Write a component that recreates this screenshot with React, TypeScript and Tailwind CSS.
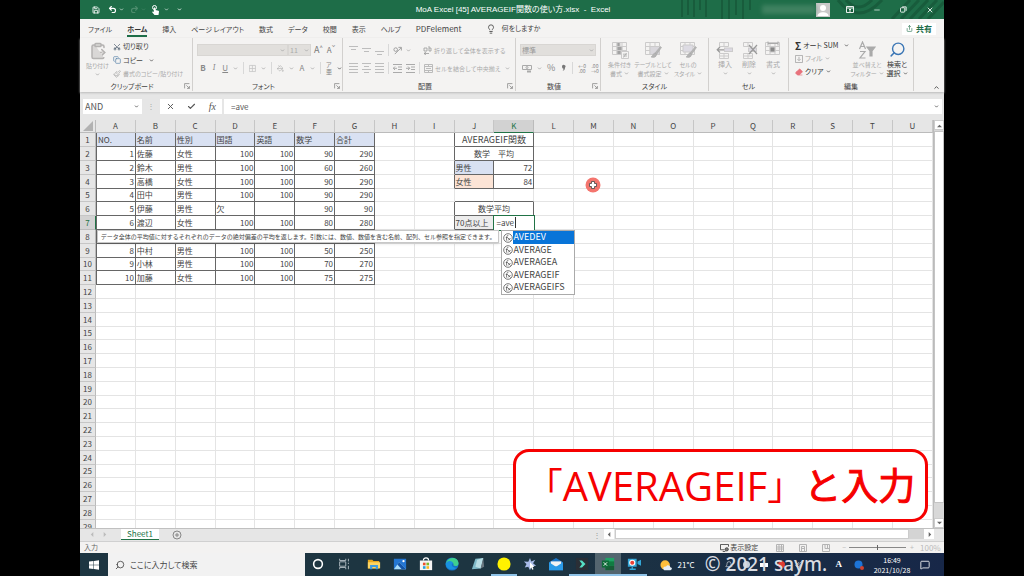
import type { ReactNode } from 'react';
import {
  Bell,
  Check,
  ChevronDown,
  ChevronUp,
  ClipboardPaste,
  Copy,
  Eraser,
  Lightbulb,
  MessageSquare,
  Minus,
  Paintbrush,
  PaintBucket,
  Redo2,
  Save,
  Scissors,
  Search,
  Share,
  Undo2,
  X,
} from 'lucide-react';
import { clsx } from 'clsx';

const TABS = ['ファイル', 'ホーム', '挿入', 'ページ レイアウト', '数式', 'データ', '校閲', '表示', 'ヘルプ', 'PDFelement'];
const COLUMNS = 'ABCDEFGHIJKLMNOPQRSTU'.split('');
const ROWS = Array.from({ length: 29 }, (_, i) => i + 1);

const SCORES: Record<number, string[]> = {
  1: ['NO.', '名前', '性別', '国語', '英語', '数学', '合計'],
  2: ['1', '佐藤', '女性', '100', '100', '90', '290'],
  3: ['2', '鈴木', '男性', '100', '100', '60', '260'],
  4: ['3', '高橋', '女性', '100', '100', '90', '290'],
  5: ['4', '田中', '男性', '100', '100', '90', '290'],
  6: ['5', '伊藤', '男性', '欠', '', '90', '90'],
  7: ['6', '渡辺', '女性', '100', '100', '80', '280'],
  8: ['', '', '', '', '', '', ''],
  9: ['8', '中村', '男性', '100', '100', '50', '250'],
  10: ['9', '小林', '男性', '100', '100', '70', '270'],
  11: ['10', '加藤', '女性', '100', '100', '75', '275'],
};

const SUGGESTIONS = ['AVEDEV', 'AVERAGE', 'AVERAGEA', 'AVERAGEIF', 'AVERAGEIFS'];

function Chevron({ dark = false }: { dark?: boolean }) {
  return <ChevronDown className={clsx('h-[5px] w-[5px] shrink-0', dark ? 'text-[#555]' : 'text-[#aaa]')} strokeWidth={4} />;
}

function Divider() {
  return <span className="h-3 w-px shrink-0 bg-[#d8d8d8]" />;
}

const TRIANGLES = {
  up: 'M0 5h6L3 2z',
  down: 'M0 1h6L3 4z',
  left: 'M4 0v6L1 3z',
  right: 'M2 0v6l3-3z',
};

function Triangle({ to, pale = false }: { to: keyof typeof TRIANGLES; pale?: boolean }) {
  return (
    <svg viewBox="0 0 6 6" className="h-[5px] w-[5px]" fill={pale ? '#bbb' : '#666'}>
      <path d={TRIANGLES[to]} />
    </svg>
  );
}

function Group({ label, className, launcher, children }: { label: string; className: string; launcher?: boolean; children: ReactNode }) {
  return (
    <section aria-label={label} className={clsx('flex shrink-0 flex-col border-r border-[#d2d0ce]', className)}>
      <div className="flex-1">{children}</div>
      <div className="flex h-[10px] items-center">
        <span className="flex-1 text-center leading-[10px] text-[#444]">{label}</span>
        {launcher && (
          <svg viewBox="0 0 10 10" className="mr-[2px] h-[6px] w-[6px]" fill="none" stroke="#888" strokeWidth="1.3">
            <path d="M1 9V1h8M4 4l5 5M9 5v4H5" />
          </svg>
        )}
      </div>
    </section>
  );
}

function BigButton({ lines, icon, active, className }: { lines: string[]; icon: ReactNode; active?: boolean; className: string }) {
  return (
    <button className={clsx('flex shrink-0 flex-col items-center whitespace-nowrap leading-[9px]', active ? 'text-[#333]' : 'text-[#a8a8a8]', className)}>
      <span className="flex h-[21px] items-center">{icon}</span>
      <span>{lines[0]}</span>
      <span className="flex items-center gap-[2px]">
        {lines[1]}
        <span className={clsx(!lines[1] && 'flex h-[9px] items-center')}>
          <Chevron dark={active} />
        </span>
      </span>
    </button>
  );
}

function Lines({ ys, short = false }: { ys: number[]; short?: boolean }) {
  return (
    <svg viewBox="0 0 9 10" className="h-[10px] w-[9px]" stroke="#bdbdbd">
      {ys.map((y, i) => (
        <path key={y} d={short && i % 2 ? `M2 ${y}.5h5` : `M0 ${y}.5h9`} />
      ))}
    </svg>
  );
}

function GridIcon({ variant }: { variant: 'cond' | 'table' | 'style' | 'insert' | 'delete' | 'format' }) {
  return (
    <svg viewBox="0 0 18 18" className="h-[18px] w-[18px]" fill="none" stroke="#cccbcb" strokeWidth="1">
      {variant === 'insert' || variant === 'delete' ? (
        <>
          <path d="M3.5 1.5h9v4h-9zM8 1.5v4M3.5 12.5h9v5h-9zM8 12.5v5M3.5 15h9" />
          <rect x="8.5" y="7" width="8" height="3.5" fill="#dcd9e2" />
          {variant === 'insert' ? <path d="M8 8.8H1.5M4 6 1.2 8.8 4 11.5" stroke="#999" strokeWidth="1.2" /> : <path d="m9 4 8 9M17 4l-8 9" stroke="#999" strokeWidth="1.2" />}
        </>
      ) : (
        <>
          <path d="M1.5 1.5h14v12h-14zM1.5 5.5h14M1.5 9.5h14M6 1.5v12M11 1.5v12" />
          {variant === 'cond' && (
            <>
              <path d="M6 1.5h3v4H6zM6 5.5h5v4H6zM6 9.5h4v4H6z" fill="#a2a2a2" />
              <path d="M10.5 10.5h7v7h-7z" fill="#f4f3f2" />
              <path d="M12 13.2h4M12 15h4M15.5 12l-3 4.5" stroke="#aaa" strokeWidth=".8" />
            </>
          )}
          {variant === 'table' && <path d="M6 5.5h9.500v8H6z" fill="#d9d7dc" />}
          {variant === 'style' && <path d="M4 4h10v7H4z" fill="#dddbe3" />}
          {(variant === 'table' || variant === 'style') && <path d="M16.500 5.500 11 12l1.500 1.500 5-7zM11 12c-2 0-2 3-4 4 3 1 5.500 0 5.500-2.500z" fill="#b4b4b4" stroke="#aaa" strokeWidth=".6" />}
          {variant === 'format' && (
            <>
              <path d="M6 6h5v5H6z" fill="#888" />
              <path d="M4 .5v4M14 .5v4M4 2.500h10" stroke="#aaa" />
            </>
          )}
        </>
      )}
    </svg>
  );
}

function TitleBar() {
  return (
    <header className="relative flex h-[19px] shrink-0 items-center bg-[#1e6d48] text-white">
      <svg className="absolute right-0 top-0 h-full w-[264px]" viewBox="0 0 264 19" fill="none" stroke="#185c3c" strokeWidth="3">
        <path d="M2 0v17M8 0v15M14 0v17M20 0v10M26 0v17M42 0v19M49 0v19M56 0v15M63 0v19M70 0v10" strokeWidth="2" />
        <path d="M158 0q20 26 44 0M166 0q12 14 26 0M212 19l18-19M221 19l18-19M230 19l18-19M239 19l18-19M248 19l16-17" />
      </svg>
      <div className="relative flex flex-1 items-center pl-3">
        <Save className="h-2 w-2" strokeWidth={2.5} />
        <Undo2 className="ml-[8px] h-[9px] w-[9px]" strokeWidth={3} />
        <ChevronDown className="ml-[2px] h-[5px] w-[5px]" strokeWidth={3} />
        <Redo2 className="ml-[6px] h-[9px] w-[9px] text-[#4d8c6d]" strokeWidth={3} />
        <ChevronDown className="ml-[2px] h-[5px] w-[5px] text-[#4d8c6d]" strokeWidth={3} />
        <svg viewBox="0 0 9 10" className="ml-[5px] h-[10px] w-[9px]" fill="#fff">
          <circle cx="3.500" cy="2.500" r="2" fill="none" stroke="#fff" />
          <path d="M2.800 2.500h1.500V5l3.200.8c.5.200.6.500.5 1L7.500 10h-4L1 7l.8-.6 1 .6z" />
        </svg>
        <ChevronDown className="ml-[4px] h-[5px] w-[5px]" strokeWidth={3} />
        <ChevronDown className="ml-[8px] h-[5px] w-[5px]" strokeWidth={4} />
      </div>
      <h1 className="relative whitespace-pre font-['Liberation_Sans','Noto_Sans_CJK_JP',sans-serif] text-[8px] leading-[19px]">MoA Excel [45] AVERAGEIF関数の使い方.xlsx  -  Excel</h1>
      <div className="relative flex flex-1 items-center justify-end pr-[10px]">
        <span className="h-[9px] w-[54px] bg-[#4d8a6b]/70 blur-[2px]" />
        <svg viewBox="0 0 14 14" className="h-[14px] w-[14px]">
          <path fill="#c9c9c9" d="M0 0h14v14H0z" />
          <circle cx="7" cy="5" r="3" fill="#fff" />
          <path d="M1.500 13c0-5 11-5 11 0z" fill="#fff" />
        </svg>
        <svg viewBox="0 0 8 7" className="ml-4 h-[7px] w-2" fill="none" stroke="#fff">
          <path d="M.5.5h7v6h-7zM.5 2h7M4 3v3M3 4l1-1 1 1" strokeWidth=".9" />
        </svg>
        <button aria-label="最小化" className="ml-[19px]"><Minus className="h-2 w-2" /></button>
        <button aria-label="元に戻す" className="ml-[19px]">
          <svg viewBox="0 0 8 8" className="h-[7px] w-[7px]" fill="none" stroke="#fff">
            <rect x=".5" y="2" width="5" height="5" rx="1" />
            <path d="M2.500 1h4.500v4.500" />
          </svg>
        </button>
        <button aria-label="閉じる" className="ml-[19px]"><X className="h-2 w-2" strokeWidth={2.5} /></button>
      </div>
    </header>
  );
}

function TabStrip() {
  return (
    <nav className="flex h-[19px] shrink-0 items-center bg-[#f4f3f2] pl-2 pr-2 text-[7px] text-[#444]">
      <div className="flex gap-[15px]">
        {TABS.map((tab) => (
          <button
            key={tab}
            className={clsx(
              'whitespace-nowrap border-b-2 pt-[2px] leading-[12px]',
              tab === 'ホーム' ? 'border-[#1e6d48] font-bold text-[#333]' : 'border-transparent',
              tab === 'PDFelement' && 'text-[8px]',
            )}
          >
            {tab}
          </button>
        ))}
      </div>
      <Lightbulb className="ml-6 h-[10px] w-[10px]" />
      <button className="ml-[6px]">何をしますか</button>
      <button className="ml-auto flex h-3 items-center gap-[3px] bg-white px-1 text-[8px] font-bold text-[#1e6d48]">
        <Share className="h-[7px] w-[7px]" />
        共有
      </button>
    </nav>
  );
}

function Ribbon() {
  return (
    <div className="relative flex h-[54px] shrink-0 bg-[#f4f3f2] pb-[1px] text-[7px] text-[#444] shadow-[0_1px_2px_#bbb]">
      <Group label="クリップボード" className="w-[113px]" launcher>
        <div className="flex pt-[2px]">
          <BigButton className="ml-1 w-[27px] text-[6px]" lines={['貼り付け', '']} icon={<ClipboardPaste className="h-[18px] w-[18px] fill-[#d9d7d6] text-[#b4b2b1]" />} />
          <div className="ml-[2px] flex flex-col whitespace-nowrap">
            <button className="flex h-[13px] items-center gap-[2px]"><Scissors className="h-2 w-2 -rotate-90 text-[#456]" />切り取り</button>
            <button className="flex h-[14px] items-center gap-[2px]"><Copy className="h-2 w-2 text-[#5580a8]" />コピー<span className="ml-1"><Chevron dark /></span></button>
            <button className="flex h-[13px] items-center gap-[2px] text-[6px] text-[#aaa]"><Paintbrush className="h-2 w-2" />書式のコピー/貼り付け</button>
          </div>
        </div>
      </Group>

      <Group label="フォント" className="w-[150px]" launcher>
        <div className="flex items-center pl-1 pt-[6px]">
          <div className="relative">
            <select aria-label="フォント名" className="h-3 w-[91px] appearance-none border border-[#d8d6d3] bg-[#e1dfdc]" disabled />
            <span className="absolute right-[3px] top-1"><Chevron /></span>
          </div>
          <div className="relative">
            <select aria-label="フォント サイズ" className="h-3 w-[23px] appearance-none border border-[#d8d6d3] bg-[#e1dfdc] pl-[1px] leading-[10px] text-[#aaa]" disabled>
              <option>11</option>
            </select>
            <span className="absolute right-[2px] top-1"><Chevron /></span>
          </div>
          <button className="ml-[3px] text-[9px] leading-3 text-[#777]">A<sup className="text-[6px]">^</sup></button>
          <button className="ml-1 text-[8px] leading-3 text-[#777]">A<sup className="text-[6px]">ˇ</sup></button>
        </div>
        <div className="mt-[6px] flex h-3 items-center gap-[5px] pl-[7px] text-[8px] text-[#888]">
          <button className="w-2 font-bold">B</button>
          <button className="w-2 font-serif italic">I</button>
          <button className="w-2 underline">U</button>
          <Chevron />
          <Divider />
          <svg viewBox="0 0 9 9" className="h-[9px] w-[9px]" fill="none" stroke="#c4c4c4"><path d="M.5.5h8v8h-8zM4.500.5v8M.5 4.500h8" /></svg>
          <Chevron />
          <Divider />
          <PaintBucket className="h-[9px] w-[9px] text-[#aaa]" />
          <Chevron />
          <button className="w-2">A</button>
          <Chevron />
          <Divider />
          <span className="flex flex-col text-[6px] leading-[7px]"><span>ア</span><span>亜</span></span>
          <Chevron dark />
        </div>
      </Group>

      <Group label="配置" className="w-[173px]" launcher>
        <div className="flex h-6 items-center gap-1 whitespace-nowrap pl-[6px] text-[6px] text-[#aaa]">
          <Lines ys={[1, 4]} short />
          <Lines ys={[3, 6]} short />
          <Lines ys={[6, 9]} short />
          <Divider />
          <svg viewBox="0 0 10 10" className="h-[9px] w-[9px]" fill="none" stroke="#999"><path d="m2 9 7-7M6 1.500h3.300V5" /><circle cx="3" cy="4" r="2" /></svg>
          <Chevron />
          <span className="ml-1"><Divider /></span>
          <button className="flex items-center gap-[2px]">
            <svg viewBox="0 0 9 9" className="h-[9px] w-[9px]" fill="none" stroke="#999"><path d="M1 2h3v3H1zM6 0v5h2V2H6M1 7.500h5M3 6 1 7.500 3 9" strokeWidth=".8" /></svg>
            <span className="[font-feature-settings:normal]">折り返して全体を表示する</span>
          </button>
        </div>
        <div className="flex h-3 items-center gap-1 whitespace-nowrap pl-[6px] text-[6px] text-[#aaa]">
          <Lines ys={[0, 3, 6, 9]} />
          <Lines ys={[0, 3, 6, 9]} short />
          <Lines ys={[0, 3, 6, 9]} />
          <Divider />
          <svg viewBox="0 0 9 9" className="h-[9px] w-[9px]" fill="none" stroke="#aaa"><path d="M0 .5h9M5 3h4M5 5.500h4M0 8.500h9M4 4.300H0M2 2.500.3 4.300 2 6" /></svg>
          <svg viewBox="0 0 9 9" className="h-[9px] w-[9px]" fill="none" stroke="#aaa"><path d="M0 .5h9M5 3h4M5 5.500h4M0 8.500h9M0 4.300h4M2 2.500l1.700 1.800L2 6" /></svg>
          <Divider />
          <button className="flex items-center gap-[2px]">
            <svg viewBox="0 0 9 9" className="h-[9px] w-[9px]" fill="none" stroke="#bbb"><path d="M.5.5h8v8h-8zM.5 2.500h8M.5 6.500h8M4.500.5v2M4.500 6.500v2M2 4.500h5" /></svg>
            <span className="[font-feature-settings:normal]">セルを結合して中央揃え</span>
          </button>
          <Chevron />
        </div>
      </Group>

      <Group label="数値" className="w-[85px]" launcher>
        <div className="relative px-1 pt-[6px]">
          <select aria-label="表示形式" className="h-3 w-full appearance-none border border-[#d8d6d3] bg-[#e1dfdc] pl-[1px] leading-[10px] text-[#999]" disabled>
            <option>標準</option>
          </select>
          <span className="absolute right-[6px] top-[10px]"><Chevron /></span>
        </div>
        <div className="mt-[6px] flex h-3 items-center gap-[5px] pl-[6px] text-[9px] text-[#888]">
          <svg viewBox="0 0 10 9" className="h-[9px] w-[10px]" fill="none" stroke="#aaa"><path d="M.5 1.500h9v4h-9z" /><circle cx="5" cy="3.500" r="1" /><path d="M5 7.500h4" strokeWidth="2" /></svg>
          <Chevron />
          <button className="leading-3">%</button>
          <button aria-label="桁区切りスタイル" className="w-[7px]">
            <svg viewBox="0 0 7 9" className="h-[9px] w-[7px]" fill="#777"><path d="M2 2.500a1.700 1.700 0 1 1 3 1.200C5 5.500 4 6.500 2.500 7c.7-.8 1-1.500 1-2.300C2.500 4.500 2 3.500 2 2.500z" /></svg>
          </button>
          <Divider />
          <button className="text-[5px] leading-[5px]">←0<br />.00</button>
          <button className="text-[5px] leading-[5px]">.00<br />→0</button>
        </div>
      </Group>

      <Group label="スタイル" className="w-[108px]">
        <div className="flex justify-between px-[5px] pt-[1px] text-[6px]">
          <BigButton className="w-[27px]" lines={['条件付き', '書式']} icon={<GridIcon variant="cond" />} />
          <BigButton className="w-10" lines={['テーブルとして', '書式設定']} icon={<GridIcon variant="table" />} />
          <BigButton className="w-[30px]" lines={['セルの', 'スタイル']} icon={<GridIcon variant="style" />} />
        </div>
      </Group>

      <Group label="セル" className="w-[80px]">
        <div className="flex justify-between px-1 pt-[1px]">
          <BigButton className="w-6" lines={['挿入', '']} icon={<GridIcon variant="insert" />} />
          <BigButton className="w-6" lines={['削除', '']} icon={<GridIcon variant="delete" />} />
          <BigButton className="w-6" lines={['書式', '']} icon={<GridIcon variant="format" />} />
        </div>
      </Group>

      <Group label="編集" className="w-[125px]">
        <div className="flex pt-[1px]">
          <div className="flex w-[60px] flex-col whitespace-nowrap pl-[6px]">
            <button className="flex h-[13px] items-center gap-[2px] text-[#333]"><b className="text-[10px] leading-3">Σ</b>オート SUM<span className="ml-1"><Chevron dark /></span></button>
            <button className="flex h-[13px] items-center gap-[2px] text-[#aaa]">
              <svg viewBox="0 0 9 9" className="h-2 w-2" fill="none" stroke="#aaa"><path d="M.5.5h8v8h-8zM4.500 2v4M2.800 4.700l1.700 1.700 1.700-1.700" /></svg>
              フィル<Chevron />
            </button>
            <button className="flex h-[13px] items-center gap-[2px] text-[#333]"><Eraser className="h-2 w-2 fill-[#e8727c] text-[#e8727c]" />クリア<Chevron dark /></button>
          </div>
          <BigButton
            className="ml-[3px] w-[30px] text-[6px]"
            lines={['並べ替えと', 'フィルター']}
            icon={
              <svg viewBox="0 0 18 18" className="h-[18px] w-[18px]" fill="none" stroke="#aaa" strokeWidth="1.200">
                <path d="m1.500 8 3-7 3 7M2.500 5.500h4M2 10.500h5L2 17h5.500" />
                <path d="M9 6h8l-3 4v5h-2v-5z" fill="#aaa" />
              </svg>
            }
          />
          <BigButton className="w-[30px]" active lines={['検索と', '選択']} icon={<Search className="h-[17px] w-[17px] -scale-x-100 text-[#3b76b5]" />} />
        </div>
      </Group>
      <button aria-label="リボンを折りたたむ" className="ml-auto self-end px-1"><ChevronUp className="h-[7px] w-[7px]" strokeWidth={3} /></button>
    </div>
  );
}

function FormulaBar() {
  return (
    <div className="flex h-7 shrink-0 items-center bg-[#e6e6e6] pl-[3px] pr-[2px] text-[8px] text-[#555]">
      <div className="relative">
        <input aria-label="名前ボックス" defaultValue="AND" className="h-[15px] w-[59px] bg-white pl-[2px] text-[9px] outline-none" />
        <span className="absolute right-[3px] top-[5px]"><Chevron dark /></span>
      </div>
      <span className="w-[18px] text-center text-[#aaa]">⋮</span>
      <div className="flex h-[15px] w-[62px] items-center justify-around bg-white">
        <X className="h-[9px] w-[9px]" strokeWidth={2.5} />
        <Check className="h-[9px] w-[9px]" strokeWidth={3} />
        <i className="font-['Liberation_Serif',serif] text-[10px]">fx</i>
      </div>
      <div className="relative ml-[2px] flex-1">
        <input aria-label="数式バー" defaultValue="=ave" className="h-[15px] w-full bg-white pl-[7px] outline-none" />
        <span className="absolute right-[3px] top-[5px]"><Chevron dark /></span>
      </div>
    </div>
  );
}

function DescriptionTip() {
  return (
    <div role="tooltip" className="absolute right-full top-[14px] -mr-[5px] w-max border border-[#c8c8c8] bg-white px-[3px] text-[6px] leading-[11px] text-[#444] shadow-sm [font-feature-settings:normal]">
      データ全体の平均値に対するそれぞれのデータの絶対偏差の平均を返します。引数には、数値、数値を含む名前、配列、セル参照を指定できます。
    </div>
  );
}

function SuggestionList() {
  return (
    <ul className="absolute left-[7px] top-[14px] z-10 w-[74px] border border-[#aaa] bg-white text-[#444]">
      {SUGGESTIONS.map((name, i) => (
        <li key={name} className="flex h-[12px] items-center odd:h-[13px]">
          <svg viewBox="0 0 10 10" className="ml-[1px] h-[10px] w-[10px] shrink-0" fill="none" stroke="#555" strokeWidth=".8">
            <circle cx="5" cy="5" r="4.300" />
            <path d="M5.300 2.500c-1.500-.5-1.500 1-1.800 5M2.800 4.500h2M5 5l2.500 2.500M7.500 5 5 7.500" />
          </svg>
          <span className={clsx('h-full flex-1 text-[9px] leading-3', i === 0 && 'bg-[#0874d8] text-white')}>{name}</span>
        </li>
      ))}
    </ul>
  );
}

function ScoreCell({ row, index, value }: { row: number; index: number; value: string }) {
  const numeric = /^\d+$/.test(value);
  return (
    <td className={clsx('border-b border-r border-[#666] px-[1px]', numeric && 'text-right', row === 1 && 'bg-[#d9e1f2]', index === 0 && 'border-l')}>{value}</td>
  );
}

// Cells of columns J and K, which hold the result tables
function ResultCells({ row }: { row: number }) {
  const box = 'border-b border-r border-[#666] px-[1px]';
  if (row === 1) return <td colSpan={2} className={clsx(box, 'text-center text-[9px]')}>AVERAGEIF関数</td>;
  if (row === 2) return <td colSpan={2} className={clsx(box, 'text-center')}>数学　平均</td>;
  if (row === 3 || row === 4) {
    return (
      <>
        <td className={clsx(box, row === 3 ? 'bg-[#d9e1f2]' : 'bg-[#fce4d6]')}>{row === 3 ? '男性' : '女性'}</td>
        <td className={clsx(box, 'text-right')}>{row === 3 ? '72' : '84'}</td>
      </>
    );
  }
  if (row === 5) {
    return (
      <>
        <td className="border-b border-r border-b-[#666] border-r-[#e4e4e4]" />
        <td className="border-b border-r border-b-[#666] border-r-[#e4e4e4]" />
      </>
    );
  }
  if (row === 6) return <td colSpan={2} className={clsx(box, 'text-center')}>数学平均</td>;
  return (
    <>
      <td className={clsx(box, 'bg-[#ededed]')}>70点以上</td>
      <td className="relative outline outline-[#217346]">
        <input aria-label="K7" defaultValue="=ave" className="block h-3 w-full bg-white pl-[2px] outline-none" />
        <span className="absolute left-[21px] top-[1px] h-[11px] w-px bg-[#333]" />
        <DescriptionTip />
        <SuggestionList />
      </td>
    </>
  );
}

function Sheet() {
  return (
    <div className="flex min-h-0 flex-1 bg-[#e6e6e6]">
      <div className="relative min-w-0 flex-1 overflow-hidden border-r border-[#bbb]">
        <table className="w-full table-fixed border-separate border-spacing-0 bg-white text-[8px] leading-3 text-[#444]">
          <thead>
            <tr className="h-[13px] bg-[#e6e6e6]">
              <th className="w-4 border-b border-r border-[#bbb]">
                <svg viewBox="0 0 12 12" className="ml-auto mr-[2px] h-[10px] w-[10px]"><path d="M12 0v12H0z" fill="#b2b2b2" /></svg>
              </th>
              {COLUMNS.map((col) => (
                <th
                  key={col}
                  className={clsx('border-b border-r font-normal', col === 'K' ? 'border-b-[#217346] border-r-[#bbb] bg-[#d2d2d2] text-[#217346]' : 'border-b-[#bbb] border-r-[#c6c6c6]')}
                >
                  {col}
                </th>
              ))}
            </tr>
          </thead>
          <tbody>
            {ROWS.map((row) => (
              <tr key={row} className={row % 5 === 0 ? 'h-[13px]' : 'h-[14px]'}>
                <th
                  className={clsx('border-b border-r font-normal', row === 7 ? 'border-b-[#bbb] border-r-[#217346] bg-[#d2d2d2] text-[#217346]' : 'border-b-[#c6c6c6] border-r-[#bbb] bg-[#e6e6e6]')}
                >
                  {row}
                </th>
                {COLUMNS.map((col, i) => {
                  if (i < 7 && SCORES[row]) return <ScoreCell key={col} row={row} index={i} value={SCORES[row][i]} />;
                  if (col === 'J' && row <= 7) return <ResultCells key={col} row={row} />;
                  if (col === 'K' && row <= 7) return null;
                  const besideResults = col === 'I' && row <= 7 && row !== 5;
                  return <td key={col} className={clsx('border-b border-r border-b-[#e4e4e4]', besideResults ? 'border-r-[#666]' : 'border-r-[#e4e4e4]')} />;
                })}
              </tr>
            ))}
          </tbody>
        </table>
      </div>
      <div className="flex w-[10px] shrink-0 flex-col items-center bg-[#d8d8d8]">
        <button aria-label="上へスクロール" className="flex h-[10px] w-full items-center justify-center border border-[#ccc] bg-white"><Triangle to="up" /></button>
        <div className="mt-px w-full flex-1 border border-[#c4c4c4] bg-white" />
        <button aria-label="下へスクロール" className="mt-[15px] flex h-[10px] w-full items-center justify-center border border-[#ccc] bg-white"><Triangle to="down" /></button>
      </div>
    </div>
  );
}

function SheetTabs() {
  return (
    <div className="flex h-[13px] shrink-0 items-start border-t border-[#c0c0c0] bg-[#e6e6e6] pr-[10px]">
      <div className="flex h-[11px] w-[41px] items-center gap-[7px] pl-[10px]">
        <Triangle to="left" pale />
        <Triangle to="right" pale />
      </div>
      <button className="h-[11px] w-[38px] border-b border-[#217346] bg-white text-[8px] leading-[10px] text-[#217346]">Sheet1</button>
      <button aria-label="新しいシート" className="ml-[13px] pt-[1px]">
        <svg viewBox="0 0 10 10" className="h-[10px] w-[10px]" fill="none" stroke="#888"><circle cx="5" cy="5" r="4" /><path d="M5 3v4M3 5h4" /></svg>
      </button>
      <span className="ml-auto w-[11px] text-[8px] leading-3 text-[#999]">⋮</span>
      <button aria-label="左へスクロール" className="flex h-[10px] w-[10px] items-center justify-center bg-white"><Triangle to="left" /></button>
      <div className="ml-px flex h-[10px] w-[309px] bg-[#d4d4d4]">
        <div className="w-[294px] border border-[#ccc] bg-white" />
      </div>
      <button aria-label="右へスクロール" className="flex h-[10px] w-[10px] items-center justify-center bg-white"><Triangle to="right" /></button>
    </div>
  );
}

function StatusBar() {
  return (
    <div className="flex h-3 shrink-0 items-center border-t border-[#d0d0d0] bg-[#f3f2f1] pl-1 pr-1 text-[7px] text-[#666]">
      <span>入力</span>
      <svg viewBox="0 0 10 9" className="ml-auto h-2 w-[9px]" fill="none" stroke="#444"><path d="M5 6.500H.5v-6h9V3M3 8.500h3" /><circle cx="7.500" cy="6" r="1.800" fill="#777" /></svg>
      <span className="ml-[1px] text-[#444]">表示設定</span>
      <svg viewBox="0 0 8 8" className="ml-[18px] h-2 w-2" fill="none" stroke="#b4b4b4"><path d="M.5.5h7v7h-7zM.5 3h7M.5 5h7M3 .5v7M5.500.5v7" /></svg>
      <svg viewBox="0 0 8 8" className="ml-[15px] h-2 w-2" fill="none" stroke="#b4b4b4"><path d="M.5.5h7v7h-7zM2.500 2.500h3v5h-3zM2.500 4.500h3" /></svg>
      <svg viewBox="0 0 8 8" className="ml-[15px] h-2 w-2" fill="none" stroke="#b4b4b4"><path d="M.5.5h7v7h-7zM3 .5v4h4.500M5.500.5v4" /></svg>
      <span className="ml-3 text-[#bbb]">−</span>
      <span className="ml-[3px] flex h-px w-[57px] items-center justify-center bg-[#888]"><span className="h-[5px] w-px bg-[#666]" /></span>
      <span className="ml-1 text-[#bbb]">+</span>
      <span className="ml-[6px] w-5 text-[8px] leading-[11px] text-[#bbb]">100%</span>
    </div>
  );
}

function TaskIcon({ open, active, children }: { open?: boolean; active?: boolean; children: ReactNode }) {
  return (
    <button className={clsx('flex h-full w-[26px] items-center justify-center border-b-2', open ? 'border-[#8fc3e8]' : 'border-transparent', active && 'bg-[#53656f]')}>
      <svg viewBox="0 0 16 16" className="h-[14px] w-[14px]" fill="none">{children}</svg>
    </button>
  );
}

function Taskbar() {
  return (
    <footer className="relative flex h-[23px] shrink-0 items-center bg-linear-to-r from-[#1d3541] via-[#1d3541] to-[#172748] text-[7px] text-white">
      <button aria-label="スタート" className="flex h-full w-7 items-center justify-center">
        <svg viewBox="0 0 10 10" className="h-[10px] w-[10px]" fill="#fff"><path d="M0 1.500 4.500 1v3.700H0zM5 .9 10 .2v4.500H5zM0 5.200h4.500V9L0 8.500zM5 5.200h5v4.600L5 9.100z" /></svg>
      </button>
      <label className="flex h-full w-[197px] items-center bg-[#f2f2f2] pl-[7px] text-[#444]">
        <Search className="h-[10px] w-[10px] -scale-x-100" />
        <input aria-label="検索" placeholder="ここに入力して検索" className="ml-[5px] w-40 bg-transparent text-[8px] outline-none placeholder:text-[#444]" />
      </label>
      <TaskIcon><circle cx="8" cy="8" r="5" stroke="#fff" strokeWidth="1.800" /></TaskIcon>
      <TaskIcon><path d="M3 5.500h7v5H3zM3 2v2h7V2M3 14v-2h7v2M13 2v3M13 6.500v1.500M13 10v4" stroke="#b8c2c8" /></TaskIcon>
      <span className="w-[4px]" />
      <TaskIcon><path d="M1 3h5l1.500 1.500H14V13H1z" fill="#e9a91e" /><path d="M1 6h14v7H1z" fill="#fcd462" /><path d="M3.500 14V9h9v5h-2.500v-2.500H6V14z" fill="#3d9be0" /></TaskIcon>
      <TaskIcon><path d="M1 2h14v12H1z" fill="#2476d2" /><path d="m1 14 6-8 8 8z" fill="#a8dcfa" /><path d="m7 6-2 2.700L10 14h5z" fill="#1555a8" /><circle cx="12" cy="4.800" r="1.300" fill="#fff" /></TaskIcon>
      <TaskIcon><path d="M5 4c0-4 6-4 6 0" stroke="#fff" strokeWidth="1.300" /><path d="M1 4h14v11H1z" fill="#f5f5f5" /><path d="M4.500 6.500h3v3h-3z" fill="#e9502d" /><path d="M8.500 6.500h3v3h-3z" fill="#7db928" /><path d="M4.500 10.500h3v3h-3z" fill="#28a0dc" /><path d="M8.500 10.500h3v3h-3z" fill="#f7b920" /></TaskIcon>
      <TaskIcon>
        <circle cx="8" cy="8" r="7.500" fill="#1572c8" />
        <path d="M1 7c2-8 14-8 14.500 0 0 3.500-4 4-6 2.500 1.500-3-3-5-6-2.500" fill="#3fcf8e" />
        <path d="M1 7c3-4 8-2.500 8 0-2.500 1-1.500 5 4 5.500C6 17 0 12 1 7z" fill="#1991e0" />
      </TaskIcon>
      <TaskIcon><path d="m5 2 9-1-3 12-10 1z" fill="#7fb9c8" /><path d="m7 3 7-2-3 12-6-2z" fill="#b9dde4" /><path d="m11 13 3-12 1 10z" fill="#6b7880" /></TaskIcon>
      <TaskIcon open><circle cx="8" cy="8" r="7.500" fill="#fff200" /></TaskIcon>
      <TaskIcon><path d="m8 1 1.500 4L14 3l-2.500 4L15 10l-5 .5L8 15l-2-4-4 1 2-4-3-3 5 .5z" fill="#a9bbe8" /><path d="m8 6 5 5-2 .3 1 2.700-1.500.5-1-2.500L8 13z" fill="#fff" /></TaskIcon>
      <TaskIcon><path d="m0 6 8-5 8 5v9H0z" fill="#1b74c5" /><path d="M2 5h12v6H2z" fill="#f4f4f4" /><path d="m0 6 8 5 8-5v9H0z" fill="#2c9be8" /></TaskIcon>
      <TaskIcon open><path d="M1 1h14v14H1z" fill="#2a2f36" /><path d="M5 4h3l4 4-4 4H5l3-4z" fill="#56dfc4" /></TaskIcon>
      <TaskIcon open active>
        <path d="M5 1h10v14H5z" fill="#21a366" /><path d="M5 5h10v5H5z" fill="#107c41" /><path d="M5 10h10v5H5z" fill="#185c37" /><path d="M1 4h8v8H1z" fill="#0f6b39" /><path d="m3 6 4 4M7 6l-4 4" stroke="#fff" />
      </TaskIcon>
      <TaskIcon open><path d="M1 2h10v9H1zM12 5l4-2v7l-4-2z" fill="#33a7d8" /><circle cx="6" cy="6.500" r="3.500" fill="#fff" /><circle cx="6" cy="6.500" r="2.300" fill="#ea4035" /><path d="M3 14h7M6 11v3" stroke="#33a7d8" strokeWidth="1.500" /></TaskIcon>

      <div className="ml-auto flex h-full items-center">
        <svg viewBox="0 0 14 14" className="h-3 w-3"><circle cx="6" cy="7" r="5.500" fill="#fdbe3b" /><path d="M5 13c-3-2 0-5 2-4 1-3 5-2 5 .500 3 .5 2 3.500 0 3.500z" fill="#e4edf5" /></svg>
        <span className="ml-[6px] text-[8px]">21°C</span>
      </div>
      <div className="relative ml-[6px] flex h-full w-[131px] items-center gap-[10px] pl-6 text-white/80">
        <Bell className="h-2 w-2" />
        <span className="h-[7px] w-[7px] rounded-full bg-[#c8d0da]" />
        <span className="h-1 w-2 bg-white" />
        <span className="h-[7px] w-[7px] rounded-full bg-[#e03c31]" />
        <Paintbrush className="h-2 w-2" />
        <p className="absolute inset-0 whitespace-nowrap text-center font-['Noto_Sans',sans-serif] text-[19px] font-medium leading-[23px] text-[#d9dce2]">© 2021 saym.</p>
      </div>
      <span className="ml-1 font-['Liberation_Serif',serif] text-[9px] font-bold">A</span>
      <svg viewBox="0 0 10 10" className="ml-3 h-[10px] w-[10px]"><circle cx="4.500" cy="4.500" r="4" fill="#1d74d8" /><circle cx="8" cy="8" r="2" fill="#d0412f" /></svg>
      <div className="ml-2 w-10 text-center text-[7px] leading-[10px]">16:49<br />2021/10/28</div>
      <MessageSquare className="ml-2 mr-[14px] h-[10px] w-[10px]" />
    </footer>
  );
}

export default function App() {
  return (
    <div className="h-screen overflow-hidden bg-black px-20 font-['Noto_Sans_CJK_JP',sans-serif] [font-feature-settings:'palt']">
      <main className="relative flex h-full flex-col bg-[#e6e6e6]">
        <TitleBar />
        <TabStrip />
        <Ribbon />
        <FormulaBar />
        <Sheet />
        <SheetTabs />
        <StatusBar />
        <Taskbar />

        {/* Pointer highlight */}
        <svg viewBox="0 0 16 16" className="absolute left-[505px] top-[177px] h-4 w-4">
          <circle cx="8" cy="8" r="7.500" fill="#f4756e" />
          <path d="M6.500 4.500h3v2h2v3h-2v2h-3v-2h-2v-3h2z" fill="#fff" stroke="#444" strokeWidth=".8" />
        </svg>

        {/* Caption */}
        <p className="absolute bottom-[54px] right-[16px] flex h-[73px] w-[415px] items-center justify-center whitespace-nowrap rounded-2xl border-[3px] border-[#f60000] bg-white font-['Open_Sans','Noto_Sans_CJK_JP',sans-serif] text-[40px] leading-none text-[#f60000] [font-feature-settings:normal]">
          <span className="text-[37px]">「</span>
          <span className="font-medium">AVERAGEIF</span>
          <span className="text-[37px]">」</span>
          <span className="text-[37px] [-webkit-text-stroke:1px]">と入力</span>
        </p>
      </main>
    </div>
  );
}
